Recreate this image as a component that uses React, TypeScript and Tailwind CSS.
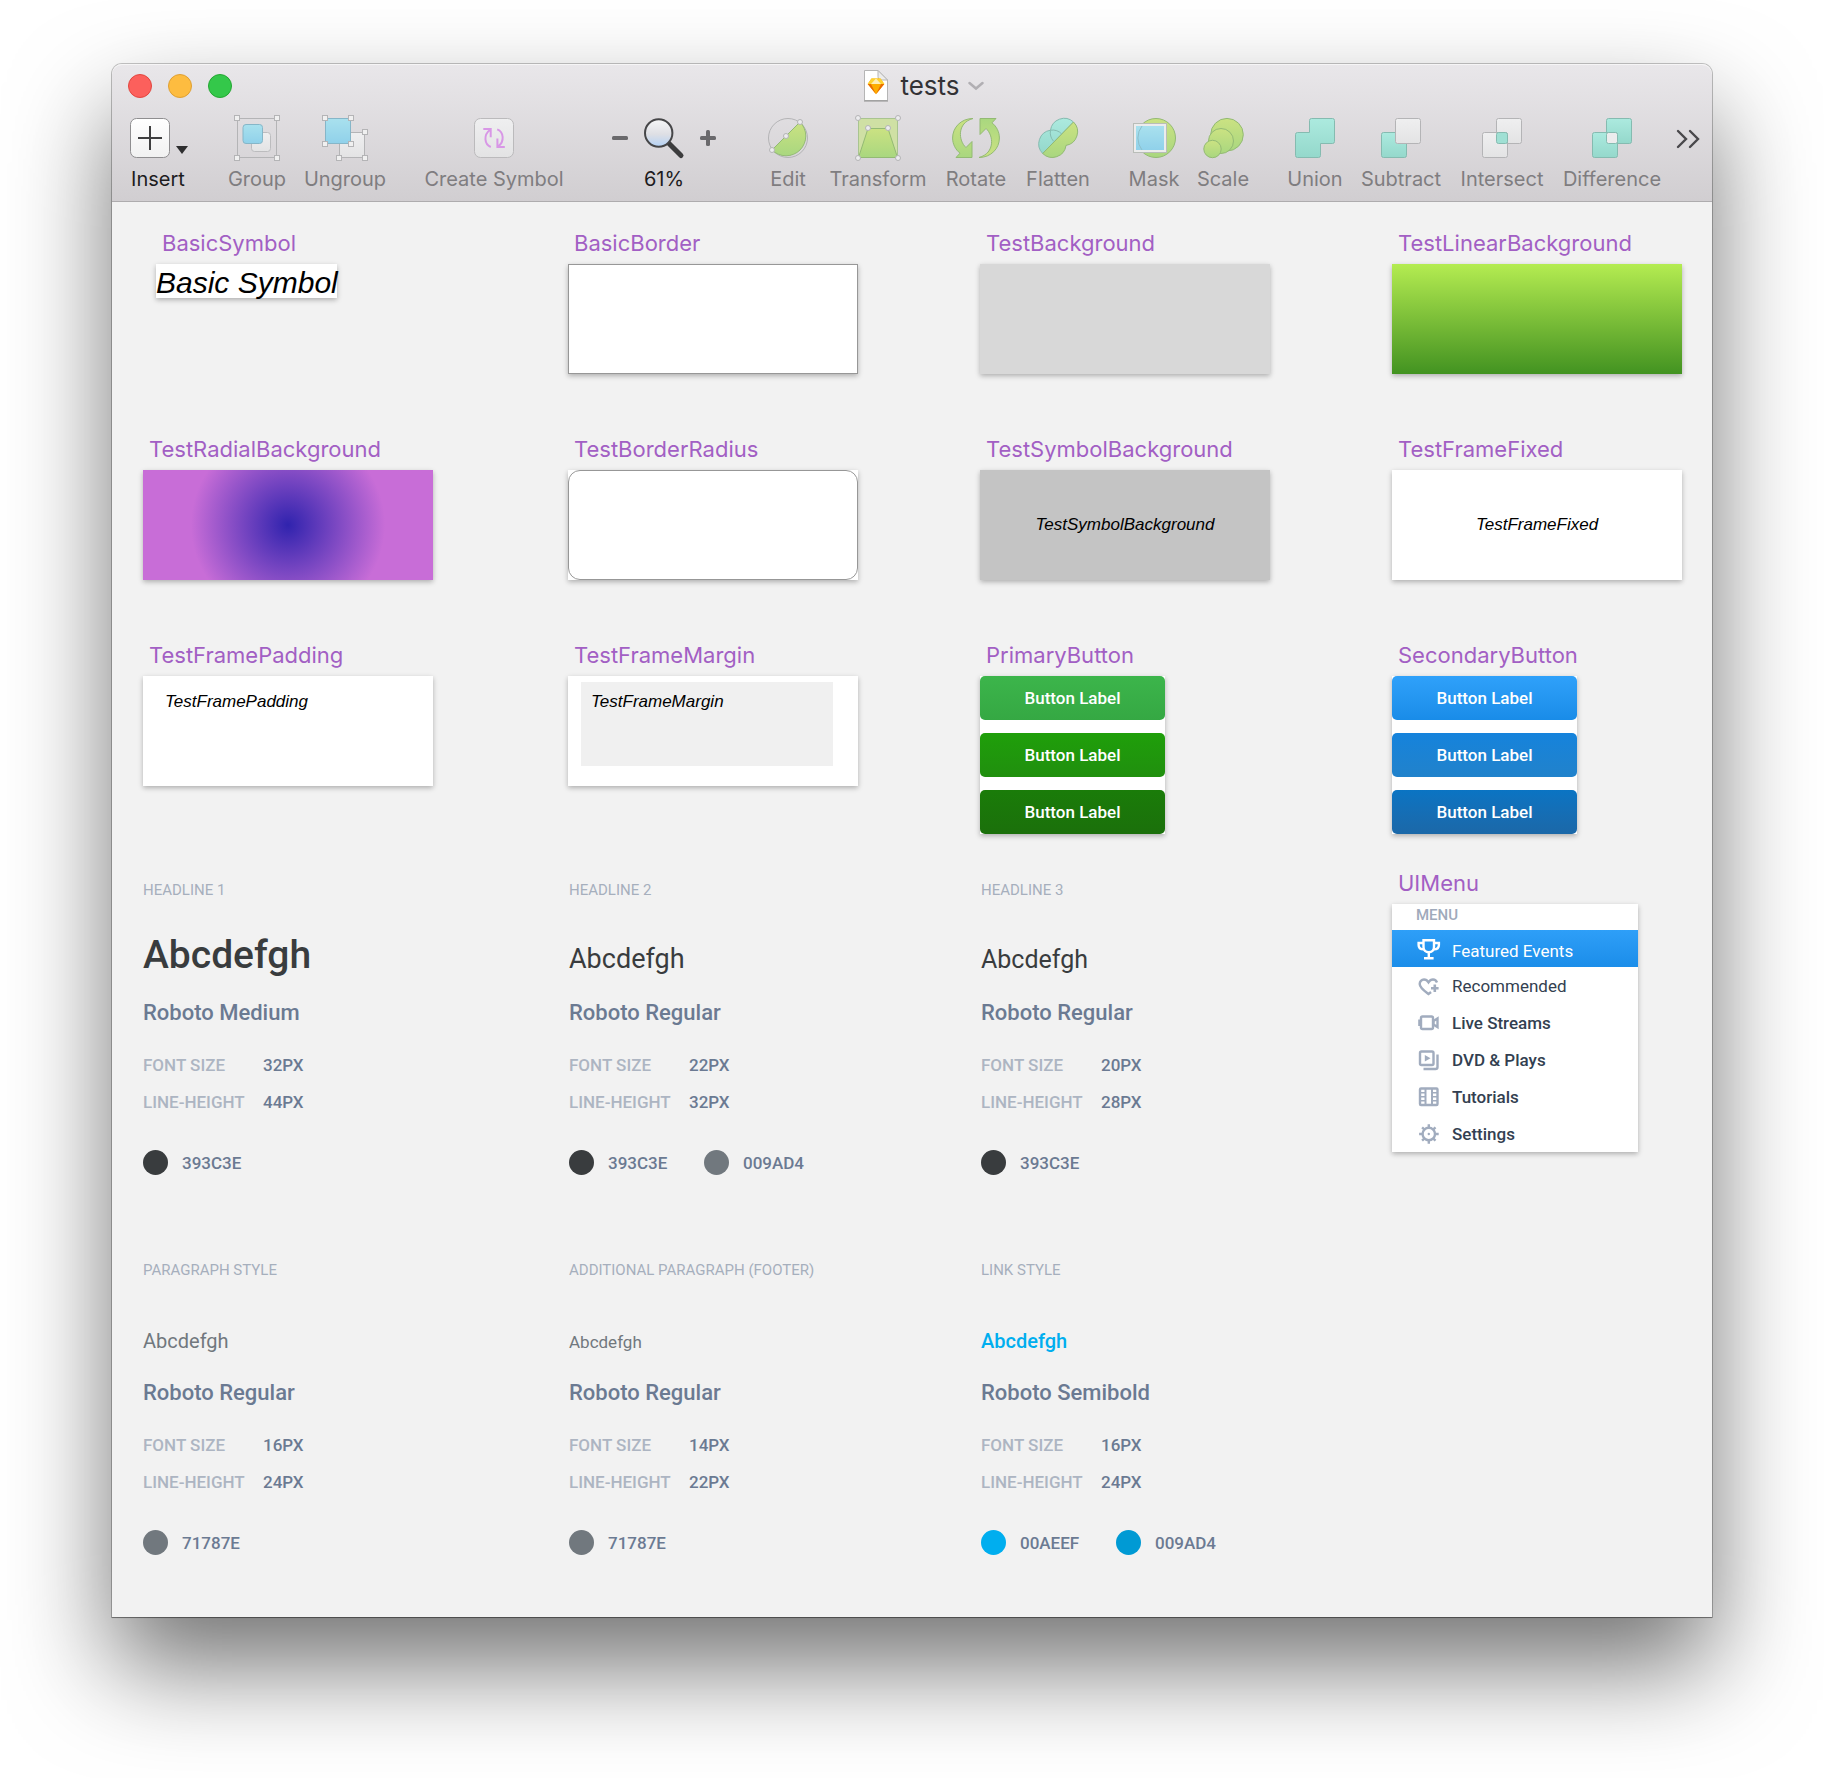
import type { ReactNode } from "react";

const EDGE = "#b4b4b6";
const GREEN_EDGE = "#93ba74";
const TEAL_EDGE = "#85bbb0";

function Defs() {
  return (
    <svg className="absolute size-0" aria-hidden="true">
      <defs>
        <linearGradient id="green" x1="0" y1="0" x2="0" y2="1">
          <stop offset="0" stopColor="#cbe282" />
          <stop offset="1" stopColor="#a9d77f" />
        </linearGradient>
        <linearGradient id="teal" x1="0" y1="0" x2="0" y2="1">
          <stop offset="0" stopColor="#aceadf" />
          <stop offset="1" stopColor="#94d8cb" />
        </linearGradient>
        <linearGradient id="blue" x1="0" y1="0" x2="0" y2="1">
          <stop offset="0" stopColor="#a9e1ee" />
          <stop offset="1" stopColor="#90d1ea" />
        </linearGradient>
        <linearGradient id="pale" x1="0" y1="0" x2="0" y2="1">
          <stop offset="0" stopColor="#efeff0" />
          <stop offset="1" stopColor="#e3e3e4" />
        </linearGradient>
        <linearGradient id="lens" x1="0" y1="0" x2="0" y2="1">
          <stop offset="0" stopColor="#f6f6f7" />
          <stop offset="0.55" stopColor="#dedfe4" />
          <stop offset="1" stopColor="#b4d2f6" />
        </linearGradient>
        <linearGradient id="plate" x1="0" y1="0" x2="0" y2="1">
          <stop offset="0" stopColor="#ffffff" />
          <stop offset="1" stopColor="#f1f1f1" />
        </linearGradient>
      </defs>
    </svg>
  );
}

function Icon({ children }: { children: ReactNode }) {
  return (
    <svg viewBox="0 0 48 48" className="size-12 shrink-0" fill="none" aria-hidden="true">
      {children}
    </svg>
  );
}

function SquareHandles({ at }: { at: number[][] }) {
  return (
    <>
      {at.map(([x, y]) => (
        <rect key={`${x}-${y}`} x={x - 2.5} y={y - 2.5} width="5" height="5" fill="#f0f0f0" stroke={EDGE} />
      ))}
    </>
  );
}

function RoundHandles({ at }: { at: number[][] }) {
  return (
    <>
      {at.map(([x, y]) => (
        <circle key={`${x}-${y}`} cx={x} cy={y} r="2.5" fill="#ececee" stroke={EDGE} />
      ))}
    </>
  );
}

const GroupIcon = () => (
  <Icon>
    <rect x="4.5" y="4.5" width="39" height="39" stroke={EDGE} />
    <rect x="18.5" y="18.5" width="19" height="19" rx="3" fill="url(#pale)" stroke="#bcbcbe" />
    <rect x="10" y="10.5" width="19.5" height="19" rx="3" fill="url(#blue)" stroke="#86b6c8" />
    <SquareHandles at={[[4, 4], [44, 4], [4, 44], [44, 44]]} />
  </Icon>
);

const UngroupIcon = () => (
  <Icon>
    <rect x="18.5" y="18.5" width="25" height="25" fill="url(#pale)" stroke={EDGE} />
    <rect x="4.5" y="4.5" width="25" height="25" fill="url(#blue)" stroke="#86b6c8" />
    <SquareHandles at={[[4, 4], [30, 4], [4, 30], [30, 30], [44, 18], [18, 44], [44, 44]]} />
  </Icon>
);

const CreateSymbolIcon = () => (
  <Icon>
    <rect x="4.5" y="4.5" width="39" height="39" rx="6" fill="url(#pale)" stroke="#bbbabc" />
    <path
      d="M13.3 15h7.4v8.3M20.8 33c-6.5-2.8-7.4-12-1-17M34.8 33h-7.4v-8.6M27.2 15.4c6.6 2.6 7.6 12 1 17"
      stroke="#d897e6"
      strokeWidth="2"
    />
  </Icon>
);

const EditIcon = () => (
  <Icon>
    <circle cx="24" cy="24" r="19.5" stroke={EDGE} />
    <path d="M8 36A19.5 19.5 0 1 0 36 8z" fill="url(#green)" stroke={GREEN_EDGE} />
    <RoundHandles at={[[8, 36], [22, 22], [36, 8]]} />
  </Icon>
);

const TransformIcon = () => (
  <Icon>
    <rect x="4.5" y="4.5" width="39" height="39" fill="#cfe0a4" stroke="#a9c490" />
    <path d="M4.5 43.5L14 14.5h20l9.5 29z" fill="url(#green)" stroke={GREEN_EDGE} />
    <RoundHandles at={[[4, 4], [44, 4], [14, 14], [34, 14], [4, 44], [44, 44]]} />
  </Icon>
);

const rotateBlade =
  "M21 4.5C9 4.500 .6 13.5 .6 24c0 6 2.8 11.5 7.4 15.2L4 43.5h16V27.5l-6 6C6.500 27 4.500 9 21 4.500z";

const RotateIcon = () => (
  <Icon>
    <path d={rotateBlade} fill="url(#green)" stroke={GREEN_EDGE} />
    <path d={rotateBlade} fill="url(#green)" stroke={GREEN_EDGE} transform="rotate(180 24 24)" />
  </Icon>
);

const FlattenIcon = () => (
  <Icon>
    <path
      d="M8.7 39.5A13.8 13.8 0 0 1 16.5 16.2 13.8 13.8 0 0 1 39.5 8z"
      fill="url(#teal)"
      stroke={TEAL_EDGE}
    />
    <path
      d="M8.7 39.5L39.5 8A13.8 13.8 0 0 1 32 31.4 13.8 13.8 0 0 1 8.7 39.5z"
      fill="url(#green)"
      stroke={GREEN_EDGE}
    />
    <path d="M16.5 16.2c4.5-.7 8.5.8 11.2 3.8M16.5 16.2c-.7 4 .2 7.8 3 11" stroke={TEAL_EDGE} />
  </Icon>
);

const MaskIcon = () => (
  <Icon>
    <circle cx="26" cy="24" r="19.5" fill="url(#green)" stroke={GREEN_EDGE} />
    <rect x="3.5" y="9.5" width="33" height="29" fill="#d5e5cf" stroke="#b9bdb8" />
    <rect x="5" y="11" width="30" height="26" stroke="#ececec" strokeWidth="2" />
    <rect x="6" y="12" width="28" height="24" fill="url(#blue)" />
    <path d="M12 12a19.5 19.5 0 0 0 0 24" stroke="#8dbfca" />
  </Icon>
);

const ScaleIcon = () => (
  <Icon>
    <circle cx="28" cy="20.7" r="16.3" fill="url(#green)" stroke={GREEN_EDGE} />
    <circle cx="22" cy="27" r="12.5" fill="url(#green)" stroke={GREEN_EDGE} />
    <circle cx="13.5" cy="35" r="8.7" fill="url(#green)" stroke={GREEN_EDGE} />
  </Icon>
);

const UnionIcon = () => (
  <Icon>
    <path
      d="M20.5 4.5h21a2 2 0 0 1 2 2v21a2 2 0 0 1-2 2h-12v12a2 2 0 0 1-2 2h-21a2 2 0 0 1-2-2v-21a2 2 0 0 1 2-2h12v-12a2 2 0 0 1 2-2z"
      fill="url(#teal)"
      stroke={TEAL_EDGE}
    />
  </Icon>
);

const SubtractIcon = () => (
  <Icon>
    <rect x="4.5" y="18.5" width="25" height="25" rx="2" fill="url(#teal)" stroke={TEAL_EDGE} />
    <rect x="18.5" y="4.5" width="25" height="25" rx="2" fill="url(#pale)" stroke={EDGE} />
  </Icon>
);

const IntersectIcon = () => (
  <Icon>
    <rect x="18.5" y="4.5" width="25" height="25" rx="2" fill="url(#pale)" stroke={EDGE} />
    <rect x="4.5" y="18.5" width="25" height="25" rx="2" fill="url(#pale)" stroke={EDGE} />
    <rect x="18.5" y="18.5" width="11" height="11" rx="2" fill="#a0e0d4" stroke={TEAL_EDGE} />
  </Icon>
);

const DifferenceIcon = () => (
  <Icon>
    <rect x="18.5" y="4.5" width="25" height="25" rx="2" fill="url(#teal)" stroke={TEAL_EDGE} />
    <rect x="4.5" y="18.5" width="25" height="25" rx="2" fill="url(#teal)" stroke={TEAL_EDGE} />
    <rect x="18.5" y="18.5" width="11" height="11" rx="2" fill="#ececed" stroke={TEAL_EDGE} />
  </Icon>
);

function Tool({ label, width, icon }: { label: string; width: string; icon: ReactNode }) {
  return (
    <button type="button" className={`${width} flex shrink-0 flex-col items-center gap-[5px] text-[#7f7d80]`}>
      {icon}
      <span className="text-[20px] leading-6 whitespace-nowrap">{label}</span>
    </button>
  );
}

function TitleBar() {
  return (
    <div className="flex h-11 items-center pr-24 pl-4">
      <div className="flex gap-4">
        <button type="button" aria-label="Close" className="size-6 rounded-full border border-[#e2463f] bg-[#fc605c]" />
        <button type="button" aria-label="Minimize" className="size-6 rounded-full border border-[#dfa033] bg-[#fdbc40]" />
        <button type="button" aria-label="Zoom window" className="size-6 rounded-full border border-[#24a732] bg-[#34c84a]" />
      </div>
      <div className="flex flex-1 items-center justify-center">
        <svg viewBox="0 0 24 32" className="h-8 w-6" fill="none" aria-hidden="true">
          <path d="M.5 .5H14L23.5 10v20.5H.5z" fill="#fff" stroke="#b5b5b5" />
          <path d="M0 31h24" stroke="#8e8e8e" />
          <path d="M14 .5v6c0 2 1 3.5 3 3.5h6.5z" fill="#ececec" stroke="#b5b5b5" />
          <path d="M7.500 8.500h9l3.800 5.500L12 24.300 3.700 14z" fill="#fdad00" />
          <path d="M7.500 8.500h9l3.800 5.500H3.700z" fill="#fdd231" />
          <path d="M12 8.500l5 5.500H7z" fill="#feeeb7" />
          <path d="M3.700 14H7l5 10.300zM20.300 14H17l-5 10.300z" fill="#ea6c00" />
        </svg>
        <h1 className="ml-3 text-[26px] leading-8 text-[#333235]">tests</h1>
        <button type="button" aria-label="Document menu" className="ml-2">
          <svg viewBox="0 0 16 10" className="h-[10px] w-4" fill="none" aria-hidden="true">
            <path d="M1.500 2L8 7.500 14.500 2" stroke="#b1afb3" strokeWidth="2.500" strokeLinecap="round" />
          </svg>
        </button>
      </div>
    </div>
  );
}

function Toolbar() {
  return (
    <div className="flex items-start pt-[6px] pr-3 pb-[10px] pl-[18px]">
      <button type="button" className="flex w-14 shrink-0 flex-col gap-[5px] text-[#1d1c1e]">
        <svg viewBox="0 0 60 48" className="h-12 w-[60px]" fill="none" aria-hidden="true">
          <rect x=".5" y="4.5" width="39" height="39" rx="6" fill="url(#plate)" stroke="#8f8e90" />
          <path d="M8 24h24M20 12v24" stroke="#3f3f40" strokeWidth="2" />
          <path d="M46 32h12l-6 8z" fill="#2e2e2f" />
        </svg>
        <span className="text-[20px] leading-6">Insert</span>
      </button>

      <div className="ml-[42px] flex gap-[18px]">
        <Tool label="Group" width="w-[58px]" icon={<GroupIcon />} />
        <Tool label="Ungroup" width="w-[82px]" icon={<UngroupIcon />} />
      </div>

      <div className="ml-[38px] flex">
        <Tool label="Create Symbol" width="w-[140px]" icon={<CreateSymbolIcon />} />
      </div>

      <div className="ml-12 flex w-[104px] shrink-0 flex-col items-center gap-[5px]">
        <div className="flex w-full items-center justify-between">
          <button type="button" aria-label="Zoom out">
            <svg viewBox="0 0 16 16" className="size-4" aria-hidden="true">
              <rect y="6" width="16" height="4" rx="1.5" fill="#6a696c" />
            </svg>
          </button>
          <Icon>
            <path d="M29 29.5L41 41.5" stroke="#3c3c3d" strokeWidth="5" strokeLinecap="round" />
            <circle cx="18.7" cy="19" r="13.7" fill="url(#lens)" stroke="#464648" strokeWidth="2" />
          </Icon>
          <button type="button" aria-label="Zoom in">
            <svg viewBox="0 0 16 16" className="size-4" aria-hidden="true">
              <rect y="6" width="16" height="4" rx="1.5" fill="#6a696c" />
              <rect x="6" width="4" height="16" rx="1.5" fill="#6a696c" />
            </svg>
          </button>
        </div>
        <span className="text-[20px] leading-6 text-[#1d1c1e]">61%</span>
      </div>

      <div className="ml-[52px] flex gap-[18px]">
        <div className="mr-[3px] flex">
          <Tool label="Edit" width="w-10" icon={<EditIcon />} />
        </div>
        <Tool label="Transform" width="w-[98px]" icon={<TransformIcon />} />
        <Tool label="Rotate" width="w-[62px]" icon={<RotateIcon />} />
        <Tool label="Flatten" width="w-[66px]" icon={<FlattenIcon />} />
      </div>

      <div className="ml-[38px] flex gap-[18px]">
        <Tool label="Mask" width="w-[50px]" icon={<MaskIcon />} />
        <Tool label="Scale" width="w-[52px]" icon={<ScaleIcon />} />
      </div>

      <div className="ml-[38px] flex gap-[18px]">
        <Tool label="Union" width="w-[56px]" icon={<UnionIcon />} />
        <Tool label="Subtract" width="w-20" icon={<SubtractIcon />} />
        <Tool label="Intersect" width="w-[86px]" icon={<IntersectIcon />} />
        <Tool label="Difference" width="w-[98px]" icon={<DifferenceIcon />} />
      </div>

      <button type="button" aria-label="More tools" className="mt-[15px] ml-auto">
        <svg viewBox="0 0 24 20" className="h-5 w-6" fill="none" aria-hidden="true">
          <path d="M2 2l8 8-8 8M14 2l8 8-8 8" stroke="#49484b" strokeWidth="2.400" strokeLinecap="round" />
        </svg>
      </button>
    </div>
  );
}

const BOARD = "shadow-[0_2px_5px_rgba(0,0,0,0.28)]";
const ITALIC = "font-['Liberation_Sans',Arial,sans-serif] text-[17px] leading-5 text-black italic";

function Artboard({ name, inset = "", children }: { name: string; inset?: string; children: ReactNode }) {
  return (
    <section className={`${inset} flex flex-col items-start gap-[7px]`}>
      <h2 className="pl-[6px] text-[22px] leading-7 text-[#a25fc4]">{name}</h2>
      {children}
    </section>
  );
}

function ButtonStack({ tones }: { tones: string[] }) {
  return (
    <div className={`${BOARD} flex w-[185px] flex-col gap-[13px] bg-white`}>
      {tones.map((tone) => (
        <button
          key={tone}
          type="button"
          className={`${tone} h-11 rounded-[5px] bg-linear-to-b font-[Roboto,sans-serif] text-[17px] leading-6 font-medium text-white`}
        >
          Button Label
        </button>
      ))}
    </div>
  );
}

type Swatch = { tone: string; code: string };
type StyleSpec = {
  title: string;
  sample: ReactNode;
  font: string;
  size: string;
  line: string;
  swatches: Swatch[];
};

const specs: StyleSpec[] = [
  {
    title: "HEADLINE 1",
    sample: <span className="font-medium text-[#393c3e]">Abcdefgh</span>,
    font: "Roboto Medium",
    size: "32PX",
    line: "44PX",
    swatches: [{ tone: "bg-[#393c3e]", code: "393C3E" }],
  },
  {
    title: "HEADLINE 2",
    sample: <span className="text-[27px] text-[#393c3e]">Abcdefgh</span>,
    font: "Roboto Regular",
    size: "22PX",
    line: "32PX",
    swatches: [
      { tone: "bg-[#393c3e]", code: "393C3E" },
      { tone: "bg-[#71787e]", code: "009AD4" },
    ],
  },
  {
    title: "HEADLINE 3",
    sample: <span className="text-[25px] text-[#393c3e]">Abcdefgh</span>,
    font: "Roboto Regular",
    size: "20PX",
    line: "28PX",
    swatches: [{ tone: "bg-[#393c3e]", code: "393C3E" }],
  },
  {
    title: "PARAGRAPH STYLE",
    sample: <span className="text-[20px] text-[#71787e]">Abcdefgh</span>,
    font: "Roboto Regular",
    size: "16PX",
    line: "24PX",
    swatches: [{ tone: "bg-[#71787e]", code: "71787E" }],
  },
  {
    title: "ADDITIONAL PARAGRAPH (FOOTER)",
    sample: <span className="text-[17px] text-[#71787e]">Abcdefgh</span>,
    font: "Roboto Regular",
    size: "14PX",
    line: "22PX",
    swatches: [{ tone: "bg-[#71787e]", code: "71787E" }],
  },
  {
    title: "LINK STYLE",
    sample: (
      <a href="#link" className="text-[20px] font-medium text-[#00aeef]">
        Abcdefgh
      </a>
    ),
    font: "Roboto Semibold",
    size: "16PX",
    line: "24PX",
    swatches: [
      { tone: "bg-[#00aeef]", code: "00AEEF" },
      { tone: "bg-[#009ad4]", code: "009AD4" },
    ],
  },
];

function TypeSpec({ spec }: { spec: StyleSpec }) {
  return (
    <section className="font-[Roboto,sans-serif] font-medium text-[#6b7a92]">
      <h2 className="text-[15px] leading-5 font-normal text-[#a6afbd]">{spec.title}</h2>
      <p className="mt-[31px] h-12 text-[39px] leading-[48px] font-normal">{spec.sample}</p>
      <h3 className="mt-5 text-[22px] leading-7">{spec.font}</h3>
      <dl className="mt-[26px] grid grid-cols-[120px_1fr] gap-y-[13px] text-[17px] leading-6">
        <dt className="text-[#adb5c2]">FONT SIZE</dt>
        <dd>{spec.size}</dd>
        <dt className="text-[#adb5c2]">LINE-HEIGHT</dt>
        <dd>{spec.line}</dd>
      </dl>
      <ul className="mt-9 flex gap-9">
        {spec.swatches.map((swatch) => (
          <li key={swatch.code} className="flex w-[99px] items-center gap-[14px] text-[17px] leading-6">
            <span className={`${swatch.tone} size-[25px] shrink-0 rounded-full`} />
            {swatch.code}
          </li>
        ))}
      </ul>
    </section>
  );
}

function MenuIcon({ children }: { children: ReactNode }) {
  return (
    <svg viewBox="0 0 24 24" className="size-6 shrink-0" fill="none" stroke="currentColor" strokeWidth="2.400" aria-hidden="true">
      {children}
    </svg>
  );
}

const TrophyIcon = () => (
  <MenuIcon>
    <path d="M6.500 3.200h10.500V10c0 3.200-2.300 5.200-5.200 5.200S6.500 13.200 6.500 10z" />
    <path d="M6.500 6H1.600v2c0 2.800 2 4.300 5 4.300M17 6h4.900v2c0 2.800-2 4.300-5 4.300M11.800 15.500V21M7 21.300h9.600" />
  </MenuIcon>
);

const HeartIcon = () => (
  <MenuIcon>
    <path d="M20 8.500C19.300 6.500 17.800 5.500 16 5.500c-2 0-3.500 1.200-4.500 2.800C10.500 6.700 9 5.500 7 5.500c-2.500 0-4.300 2-4.300 4.500 0 3.800 4.500 6.800 8.800 10 .8-.7 1.700-1.300 2.500-2" />
    <path d="M17.800 10.500v7.400M14 14.200h7.600" strokeWidth="2.600" />
  </MenuIcon>
);

const CameraIcon = () => (
  <MenuIcon>
    <rect x="4" y="5.500" width="12" height="12.500" rx="1.500" />
    <path d="M2.500 8.500v6.500" strokeWidth="2.600" />
    <path d="M16.500 10L20.500 7.500v8.500l-4-2.500z" />
  </MenuIcon>
);

const PlaysIcon = () => (
  <MenuIcon>
    <rect x="3" y="3.500" width="13.500" height="13.500" rx="1.500" />
    <path d="M20.500 6.500V19a2 2 0 0 1-2 2H6.500" />
    <path d="M7.800 7l5.700 3.200L7.800 13.500z" fill="currentColor" strokeWidth="0" />
  </MenuIcon>
);

const FilmIcon = () => (
  <MenuIcon>
    <rect x="3" y="3.500" width="17.500" height="16.500" rx="1" />
    <path d="M8.500 3.500V20M15 3.500V20" strokeWidth="2" />
    <path d="M3 7.800h5M3 11.800h5M3 15.800h5M15.500 7.800h5M15.500 11.800h5M15.500 15.800h5" strokeWidth="1.600" />
  </MenuIcon>
);

const GearIcon = () => (
  <MenuIcon>
    <circle cx="11.800" cy="12" r="6.200" />
    <circle cx="11.800" cy="12" r="1.200" fill="currentColor" strokeWidth="0" />
    <path d="M11.800 2.300V6M11.800 18v3.700M2.100 12H6M18 12h3.700M5.100 5.300l2.400 2.400M16.100 16.300l2.400 2.400M18.500 5.300l-2.400 2.400M7.500 16.300l-2.400 2.400" />
  </MenuIcon>
);

const menuItems = [
  { label: "Recommended", icon: <HeartIcon />, weight: "font-normal" },
  { label: "Live Streams", icon: <CameraIcon />, weight: "font-medium" },
  { label: "DVD & Plays", icon: <PlaysIcon />, weight: "font-medium" },
  { label: "Tutorials", icon: <FilmIcon />, weight: "font-medium" },
  { label: "Settings", icon: <GearIcon />, weight: "font-medium" },
];

function UIMenu() {
  return (
    <nav className={`${BOARD} w-[246px] bg-white font-[Roboto,sans-serif] text-[17px] leading-6 text-[#333f51]`}>
      <p className="h-[26px] pl-6 text-[15px] leading-[22px] font-medium text-[#9faabb]">MENU</p>
      <a
        href="#featured"
        className="flex h-[37px] items-center gap-[11px] bg-linear-to-b from-[#2e9ff8] to-[#1b8de9] pl-[25px] text-white"
      >
        <TrophyIcon />
        <span className="pt-1">Featured Events</span>
      </a>
      {menuItems.map((item) => (
        <a key={item.label} href={`#${item.label}`} className={`${item.weight} flex h-[37px] items-center gap-[11px] pl-[25px]`}>
          <span className="text-[#a1acbe]">{item.icon}</span>
          {item.label}
        </a>
      ))}
    </nav>
  );
}

export default function App() {
  return (
    <main className="min-h-screen bg-white px-28 pt-16 pb-40 font-[Inter,sans-serif]">
      <Defs />
      <div className="rounded-t-[10px] bg-[#f2f2f2] shadow-[0_0_0_1px_rgba(0,0,0,0.22),0_1px_1px_rgba(0,0,0,0.3),0_50px_100px_rgba(0,0,0,0.55)]">
        <header className="rounded-t-[10px] border-b border-[#aeacae] bg-linear-to-b from-[#e9e7ea] to-[#d1ced1] shadow-[inset_0_1px_0_#f6f5f6]">
          <TitleBar />
          <Toolbar />
        </header>

        <div className="pt-[27px] pb-[62px] pl-[31px]">
          <div className="grid grid-cols-[425fr_412fr_412fr_320fr] gap-y-[61px]">
            <Artboard name="BasicSymbol" inset="pl-[13px]">
              <p className={`${BOARD} h-[34px] w-[181px] bg-white font-['Liberation_Sans',Arial,sans-serif] text-[30px] leading-[38px] whitespace-nowrap text-black italic`}>
                Basic Symbol
              </p>
            </Artboard>
            <Artboard name="BasicBorder">
              <div className={`${BOARD} h-[110px] w-[290px] border border-[#979797] bg-white`} />
            </Artboard>
            <Artboard name="TestBackground">
              <div className={`${BOARD} h-[110px] w-[290px] bg-[#d8d8d8]`} />
            </Artboard>
            <Artboard name="TestLinearBackground">
              <div className={`${BOARD} h-[110px] w-[290px] bg-linear-to-b from-[#b4ec51] to-[#429321]`} />
            </Artboard>

            <Artboard name="TestRadialBackground">
              <div className={`${BOARD} h-[110px] w-[290px] bg-[radial-gradient(circle_97px,#3023ae,#c86dd7)]`} />
            </Artboard>
            <Artboard name="TestBorderRadius">
              <div className={`${BOARD} bg-white`}>
                <div className="h-[110px] w-[290px] rounded-[12px] border border-[#979797]" />
              </div>
            </Artboard>
            <Artboard name="TestSymbolBackground">
              <div className={`${BOARD} ${ITALIC} flex h-[110px] w-[290px] items-center justify-center bg-[#c4c4c4]`}>
                TestSymbolBackground
              </div>
            </Artboard>
            <Artboard name="TestFrameFixed">
              <div className={`${BOARD} ${ITALIC} flex h-[110px] w-[290px] items-center justify-center bg-white`}>
                TestFrameFixed
              </div>
            </Artboard>

            <Artboard name="TestFramePadding">
              <div className={`${BOARD} ${ITALIC} h-[110px] w-[290px] bg-white px-[22px] py-4`}>TestFramePadding</div>
            </Artboard>
            <Artboard name="TestFrameMargin">
              <div className={`${BOARD} h-[110px] w-[290px] bg-white pt-[6px] pl-[13px]`}>
                <div className={`${ITALIC} h-[84px] w-[252px] bg-[#f0f0f0] px-[10px] py-[10px]`}>TestFrameMargin</div>
              </div>
            </Artboard>
            <Artboard name="PrimaryButton">
              <ButtonStack
                tones={["from-[#3cb54b] to-[#35a843]", "from-[#1f9f0a] to-[#208f0e]", "from-[#1a7c09] to-[#1b700b]"]}
              />
            </Artboard>
            <Artboard name="SecondaryButton">
              <ButtonStack
                tones={["from-[#2fa1fa] to-[#198ce8]", "from-[#1583dc] to-[#2182cb]", "from-[#0a74c3] to-[#1b68a8]"]}
              />
            </Artboard>
          </div>

          <div className="mt-[35px] grid grid-cols-[1249fr_320fr]">
            <div className="grid grid-cols-[426fr_412fr_411fr] gap-y-[85px] pt-[11px]">
              {specs.map((spec) => (
                <TypeSpec key={spec.title} spec={spec} />
              ))}
            </div>
            <Artboard name="UIMenu">
              <UIMenu />
            </Artboard>
          </div>
        </div>
      </div>
    </main>
  );
}
